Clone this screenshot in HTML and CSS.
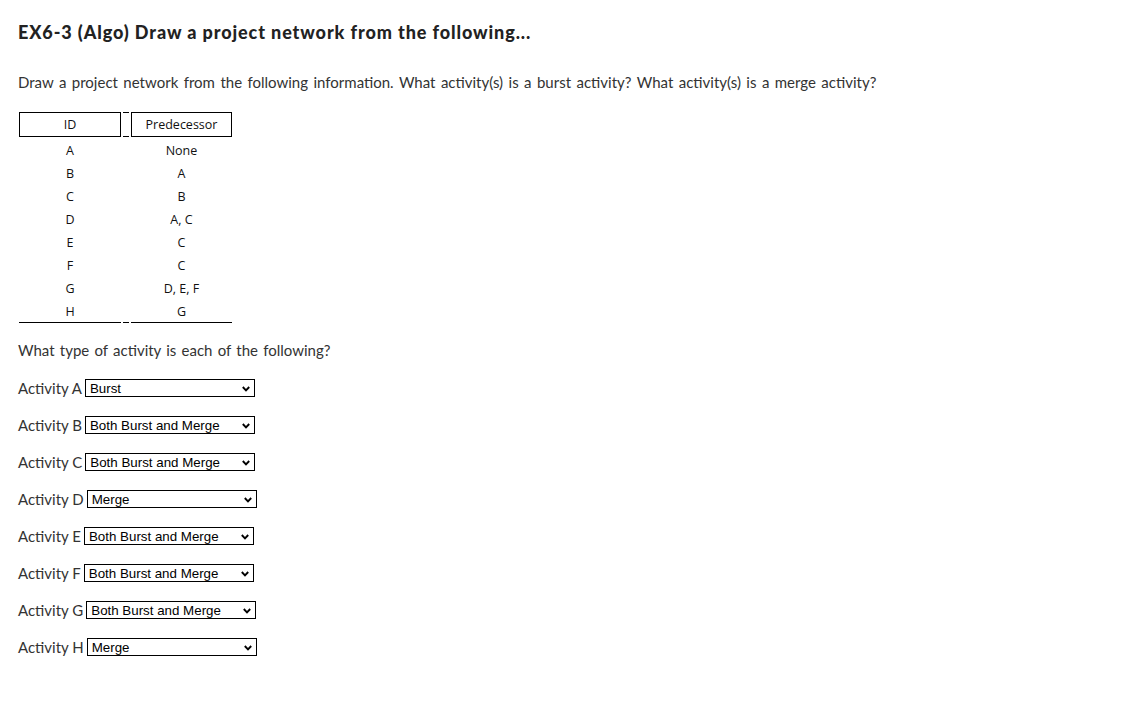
FILE: index.html
```html
<!DOCTYPE html>
<html>
<head>
<meta charset="utf-8">
<link rel="stylesheet" href="styles.css">
</head>
<body>
<div class="page">
  <h1 class="title">EX6-3 (Algo) Draw a project network from the following...</h1>
  <p class="intro">Draw a project network from the following information. What activity(s) is a burst activity? What activity(s) is a merge activity?</p>
  <table class="net">
    <thead>
      <tr><th class="c1">ID</th><th class="sp"></th><th class="c2">Predecessor</th></tr>
    </thead>
    <tbody>
      <tr><td>A</td><td class="sp"></td><td>None</td></tr>
      <tr><td>B</td><td class="sp"></td><td>A</td></tr>
      <tr><td>C</td><td class="sp"></td><td>B</td></tr>
      <tr><td>D</td><td class="sp"></td><td>A, C</td></tr>
      <tr><td>E</td><td class="sp"></td><td>C</td></tr>
      <tr><td>F</td><td class="sp"></td><td>C</td></tr>
      <tr><td>G</td><td class="sp"></td><td>D, E, F</td></tr>
      <tr class="last"><td>H</td><td class="sp"></td><td>G</td></tr>
    </tbody>
  </table>
  <p class="question">What type of activity is each of the following?</p>
  <div class="answers">
    <div class="row"><span class="lbl">Activity A</span><span class="select"><span class="val">Burst</span><svg class="chev" width="8" height="6" viewBox="0 0 8 6"><path d="M0.8 1 L4 4.3 L7.2 1" fill="none" stroke="#000" stroke-width="1.9"/></svg></span></div>
    <div class="row"><span class="lbl">Activity B</span><span class="select"><span class="val">Both Burst and Merge</span><svg class="chev" width="8" height="6" viewBox="0 0 8 6"><path d="M0.8 1 L4 4.3 L7.2 1" fill="none" stroke="#000" stroke-width="1.9"/></svg></span></div>
    <div class="row"><span class="lbl">Activity C</span><span class="select"><span class="val">Both Burst and Merge</span><svg class="chev" width="8" height="6" viewBox="0 0 8 6"><path d="M0.8 1 L4 4.3 L7.2 1" fill="none" stroke="#000" stroke-width="1.9"/></svg></span></div>
    <div class="row"><span class="lbl">Activity D</span><span class="select"><span class="val">Merge</span><svg class="chev" width="8" height="6" viewBox="0 0 8 6"><path d="M0.8 1 L4 4.3 L7.2 1" fill="none" stroke="#000" stroke-width="1.9"/></svg></span></div>
    <div class="row"><span class="lbl">Activity E</span><span class="select"><span class="val">Both Burst and Merge</span><svg class="chev" width="8" height="6" viewBox="0 0 8 6"><path d="M0.8 1 L4 4.3 L7.2 1" fill="none" stroke="#000" stroke-width="1.9"/></svg></span></div>
    <div class="row"><span class="lbl">Activity F</span><span class="select"><span class="val">Both Burst and Merge</span><svg class="chev" width="8" height="6" viewBox="0 0 8 6"><path d="M0.8 1 L4 4.3 L7.2 1" fill="none" stroke="#000" stroke-width="1.9"/></svg></span></div>
    <div class="row"><span class="lbl">Activity G</span><span class="select"><span class="val">Both Burst and Merge</span><svg class="chev" width="8" height="6" viewBox="0 0 8 6"><path d="M0.8 1 L4 4.3 L7.2 1" fill="none" stroke="#000" stroke-width="1.9"/></svg></span></div>
    <div class="row"><span class="lbl">Activity H</span><span class="select"><span class="val">Merge</span><svg class="chev" width="8" height="6" viewBox="0 0 8 6"><path d="M0.8 1 L4 4.3 L7.2 1" fill="none" stroke="#000" stroke-width="1.9"/></svg></span></div>
  </div>
</div>
</body>
</html>
```
FILE: styles.css
```css
html, body {
  margin: 0;
  padding: 0;
  background: #fff;
}
.page {
  padding: 21px 0 0 18px;
  font-family: "Lato", "Open Sans", sans-serif;
  color: #333;
}
.title {
  margin: 0;
  font-size: 18px;
  font-weight: 900;
  letter-spacing: 0.9px;
  color: #222;
  line-height: 22px;
}
.intro {
  margin: 29px 0 0 0;
  font-size: 15px;
  line-height: 20px;
  word-spacing: 1.6px;
}
.net {
  margin: 20px 0 0 -1px;
  border-collapse: separate;
  border-spacing: 2px 0;
  font-family: "Open Sans", sans-serif;
  font-size: 12.5px;
  color: #111;
}
.net th {
  font-weight: normal;
  height: 23px;
  padding: 0;
  border-top: 1px solid #000;
  border-bottom: 1px solid #000;
  text-align: center;
}
.net th.c1 {
  width: 100px;
  border-left: 1px solid #000;
  border-right: 1px solid #000;
}
.net th.c2 {
  width: 99px;
  border-left: 1px solid #000;
  border-right: 1px solid #000;
}
.net .sp {
  width: 6px;
  padding: 0;
}
.net td {
  height: 22px;
  padding: 1px 0 0 0;
  text-align: center;
  vertical-align: middle;
}
.net tbody tr:first-child td {
  padding-top: 2px;
}
.net tr.last td {
  border-bottom: 1px solid #000;
}
.question {
  margin: 17px 0 0 0;
  font-size: 15px;
  line-height: 20px;
  word-spacing: 1.4px;
}
.answers {
  margin-top: 18px;
  display: flex;
  flex-direction: column;
  gap: 17px;
}
.row {
  display: flex;
  align-items: center;
  height: 20px;
  font-size: 15px;
}
.lbl {
  margin-right: 3px;
}
.select {
  box-sizing: border-box;
  width: 170px;
  height: 18px;
  border: 1px solid #000;
  display: flex;
  align-items: center;
  justify-content: space-between;
  padding: 1px 4px 0 4px;
  font-family: "Liberation Sans", Arial, sans-serif;
  font-size: 13.33px;
  color: #000;
}
.chev {
  display: block;
}
```
